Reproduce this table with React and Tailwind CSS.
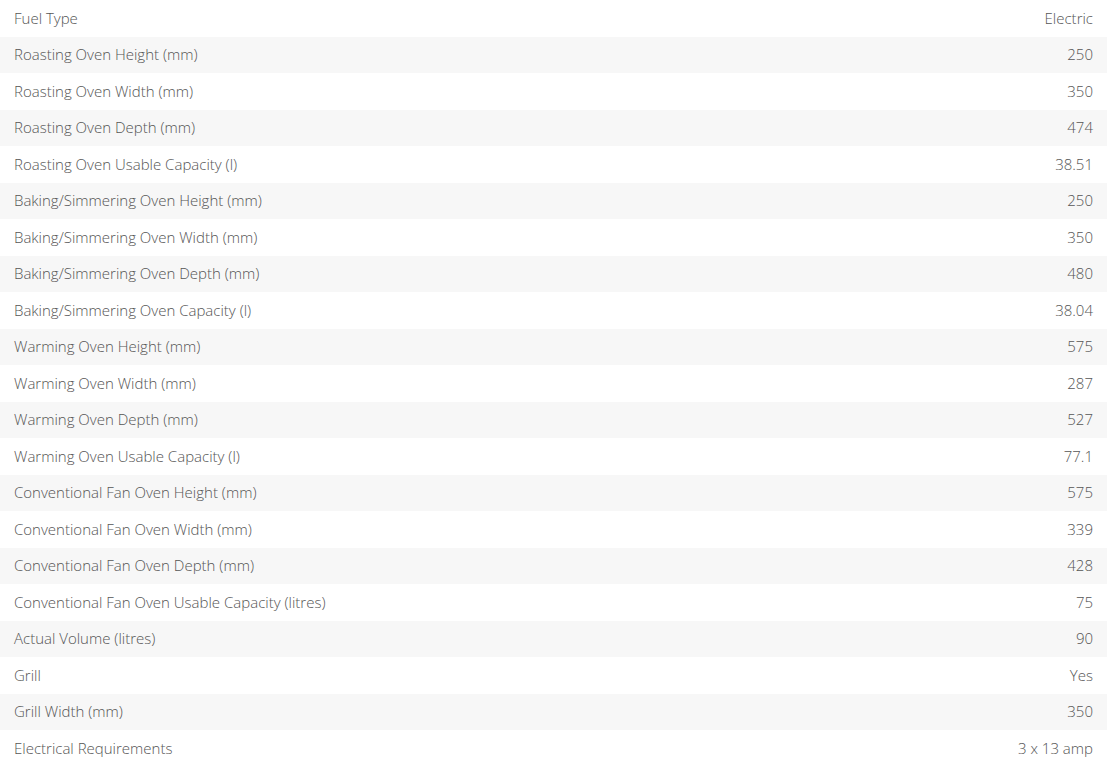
import React from "react";

const rows = [
  ["Fuel Type", "Electric"],
  ["Roasting Oven Height (mm)", "250"],
  ["Roasting Oven Width (mm)", "350"],
  ["Roasting Oven Depth (mm)", "474"],
  ["Roasting Oven Usable Capacity (l)", "38.51"],
  ["Baking/Simmering Oven Height (mm)", "250"],
  ["Baking/Simmering Oven Width (mm)", "350"],
  ["Baking/Simmering Oven Depth (mm)", "480"],
  ["Baking/Simmering Oven Capacity (l)", "38.04"],
  ["Warming Oven Height (mm)", "575"],
  ["Warming Oven Width (mm)", "287"],
  ["Warming Oven Depth (mm)", "527"],
  ["Warming Oven Usable Capacity (l)", "77.1"],
  ["Conventional Fan Oven Height (mm)", "575"],
  ["Conventional Fan Oven Width (mm)", "339"],
  ["Conventional Fan Oven Depth (mm)", "428"],
  ["Conventional Fan Oven Usable Capacity (litres)", "75"],
  ["Actual Volume (litres)", "90"],
  ["Grill", "Yes"],
  ["Grill Width (mm)", "350"],
  ["Electrical Requirements", "3 x 13 amp"],
];

export default function App() {
  return (
    <div className="w-[1107px] min-h-[771px] bg-white font-['Open_Sans',sans-serif] text-[15px] leading-[20px] text-[#555] font-light">
      {rows.map(([k, v], i) => (
        <div
          key={i}
          className={`flex h-[36.5px] items-center justify-between px-[14px] pb-[1px] ${i % 2 === 1 ? "bg-[#f7f7f7]" : "bg-white"}`}
        >
          <span>{k}</span>
          <span>{v}</span>
        </div>
      ))}
    </div>
  );
}
